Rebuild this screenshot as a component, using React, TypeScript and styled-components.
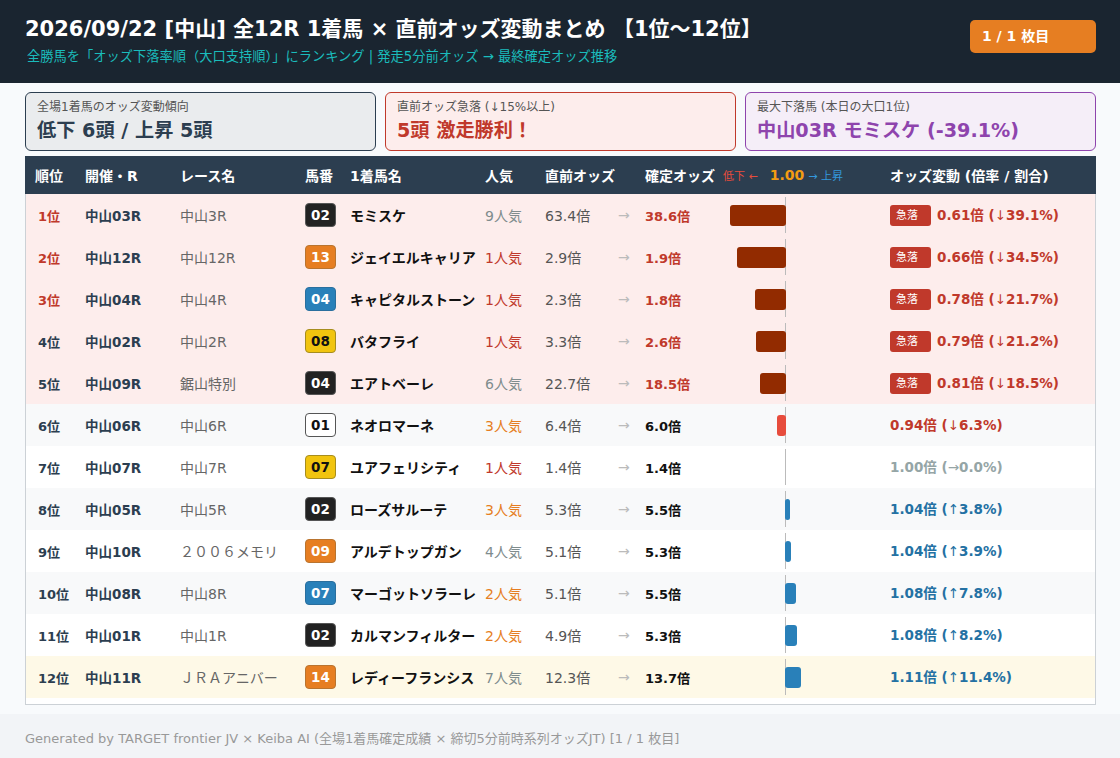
import styled, { createGlobalStyle } from 'styled-components';

const GlobalStyle = createGlobalStyle`
  html, body {
    margin: 0;
    padding: 0;
    background: #f8fafc;
    font-family: "DejaVu Sans", "Noto Sans CJK JP", sans-serif;
  }
`;

const Page = styled.div`
  width: 1120px;
  height: 758px;
  display: flex;
  flex-direction: column;
  overflow: hidden;
`;

const Header = styled.header`
  height: 83px;
  box-sizing: border-box;
  background: #1a2530;
  padding: 15px 24px 0 25px;
  display: flex;
  justify-content: space-between;
  align-items: flex-start;
`;

const Title = styled.h1`
  margin: 0;
  font-size: 21px;
  line-height: 28px;
  font-weight: 700;
  color: #fff;
`;

const Subtitle = styled.p`
  margin: 5px 0 0 2px;
  font-size: 13.25px;
  line-height: 18px;
  color: #1abcbc;
`;

const PageTag = styled.div`
  width: 126px;
  height: 33px;
  margin-top: 5px;
  box-sizing: border-box;
  padding-left: 12px;
  background: #e67e22;
  border-radius: 5px;
  color: #fff;
  font-size: 14px;
  font-weight: 700;
  line-height: 32px;
`;

const Main = styled.main`
  flex: 1;
  padding: 9px 24px 9px 25px;
  display: flex;
  flex-direction: column;
  gap: 5px;
`;

const Cards = styled.div`
  display: grid;
  grid-template-columns: repeat(3, 351px);
  gap: 9px;
`;

const Card = styled.div<{ $border: string; $bg: string; $color: string }>`
  height: 59px;
  box-sizing: border-box;
  padding: 6px 11px 0;
  border: 1px solid ${(p) => p.$border};
  background: ${(p) => p.$bg};
  border-radius: 6px;
  color: ${(p) => p.$color};
`;

const CardLabel = styled.div`
  font-size: 12px;
  line-height: 17px;
  color: #555;
`;

const CardValue = styled.div`
  margin-top: 2px;
  font-size: 19.2px;
  line-height: 25px;
  font-weight: 700;
`;

const Table = styled.div`
  height: 549px;
  box-sizing: border-box;
  border: 1px solid #ccd1d6;
  border-top: 0;
  background: #fff;
`;

const tail = '95px 125px 45px 135px 60px 73px 27px 80px 165px 1fr';

const HeadRow = styled.div`
  height: 38px;
  margin: 0 -1px;
  display: grid;
  grid-template-columns: 60px ${tail};
  align-items: center;
  background: #2c3e50;
  color: #fff;
  font-size: 14px;
  font-weight: 700;
`;

const HeadCell = styled.div<{ $span?: number; $pad?: number }>`
  padding-left: ${(p) => p.$pad ?? 0}px;
  white-space: nowrap;
  ${(p) => (p.$span ? `grid-column: span ${p.$span};` : '')}
`;

const Legend = styled.div`
  display: flex;
  align-items: center;
  margin-left: -2px;
  font-size: 11px;
  font-weight: 400;
  white-space: nowrap;
`;

const LegendDown = styled.span`
  color: #e74c3c;
`;

const LegendUp = styled.span`
  color: #3498db;
`;

const LegendBase = styled.span`
  margin: 0 4px 0 12px;
  color: #f39c12;
  font-size: 14px;
  font-weight: 700;
`;

const Row = styled.div<{ $bg: string }>`
  height: 42px;
  display: grid;
  grid-template-columns: 59px ${tail};
  align-items: center;
  background: ${(p) => p.$bg};
  font-size: 14px;
`;

const Rank = styled.div<{ $hot: boolean }>`
  padding-left: 12px;
  font-size: 13px;
  font-weight: 700;
  color: ${(p) => (p.$hot ? '#c0392b' : '#2c3e50')};
`;

const Venue = styled.div`
  font-size: 13.5px;
  font-weight: 700;
  color: #2c3e50;
`;

const RaceName = styled.div`
  color: #666;
  white-space: nowrap;
`;

const Badge = styled.div<{ $bg: string; $fg: string; $line: string }>`
  width: 31px;
  height: 24px;
  box-sizing: border-box;
  border: 1px solid ${(p) => p.$line};
  border-radius: 4px;
  background: ${(p) => p.$bg};
  color: ${(p) => p.$fg};
  font-weight: 700;
  font-size: 13.5px;
  line-height: 22px;
  text-align: center;
`;

const HorseName = styled.div`
  font-weight: 700;
  color: #111;
  white-space: nowrap;
`;

const Popularity = styled.div<{ $color: string }>`
  color: ${(p) => p.$color};
  white-space: nowrap;
`;

const Odds = styled.div`
  color: #555;
`;

const Arrow = styled.div`
  color: #bbb;
`;

const FinalOdds = styled.div<{ $hot: boolean }>`
  font-size: 13px;
  font-weight: 700;
  color: ${(p) => (p.$hot ? '#c0392b' : '#111')};
`;

const Chart = styled.div`
  position: relative;
  width: 120px;
  height: 36px;
`;

const Axis = styled.div`
  position: absolute;
  left: 60px;
  top: 0;
  bottom: 0;
  width: 1px;
  background: #bbb;
`;

const Bar = styled.div<{ $color: string; $down: boolean }>`
  position: absolute;
  top: 7.5px;
  height: 21px;
  border-radius: 3px;
  background: ${(p) => p.$color};
  ${(p) => (p.$down ? 'right: 59px;' : 'left: 60px;')}
`;

const Change = styled.div`
  display: flex;
  align-items: center;
  gap: 6px;
  white-space: nowrap;
`;

const RapidTag = styled.span`
  width: 41px;
  height: 21px;
  box-sizing: border-box;
  padding-left: 6px;
  border-radius: 3px;
  background: #c0392b;
  color: #fff;
  font-size: 11px;
  line-height: 21px;
`;

const ChangeText = styled.span<{ $color: string }>`
  padding-bottom: 2px;
  color: ${(p) => p.$color};
  font-size: 13.5px;
  font-weight: 700;
`;

const ThinArrow = styled.span`
  font-weight: 400;
`;

const Footer = styled.footer`
  height: 44px;
  box-sizing: border-box;
  padding: 16px 25px 0;
  background: #f2f4f7;
  color: #999;
  font-size: 13px;
  line-height: 18px;
`;

type Gate = 'black' | 'orange' | 'blue' | 'yellow' | 'white';

interface Race {
  venue: string;
  name: string;
  gate: string;
  tone: Gate;
  horse: string;
  pop: number;
  before: string;
  after: string;
  ratio: string;
  pct: number;
}

const gateColors: Record<Gate, { bg: string; fg: string; line: string }> = {
  black: { bg: '#222', fg: '#fff', line: '#555' },
  orange: { bg: '#e67e22', fg: '#fff', line: '#b9742f' },
  blue: { bg: '#2980b9', fg: '#fff', line: '#2a6f9e' },
  yellow: { bg: '#f1c40f', fg: '#111', line: '#a68d1f' },
  white: { bg: '#fff', fg: '#111', line: '#555' },
};

const races: Race[] = [
  { venue: '中山03R', name: '中山3R', gate: '02', tone: 'black', horse: 'モミスケ', pop: 9, before: '63.4', after: '38.6', ratio: '0.61', pct: -39.1 },
  { venue: '中山12R', name: '中山12R', gate: '13', tone: 'orange', horse: 'ジェイエルキャリア', pop: 1, before: '2.9', after: '1.9', ratio: '0.66', pct: -34.5 },
  { venue: '中山04R', name: '中山4R', gate: '04', tone: 'blue', horse: 'キャピタルストーン', pop: 1, before: '2.3', after: '1.8', ratio: '0.78', pct: -21.7 },
  { venue: '中山02R', name: '中山2R', gate: '08', tone: 'yellow', horse: 'バタフライ', pop: 1, before: '3.3', after: '2.6', ratio: '0.79', pct: -21.2 },
  { venue: '中山09R', name: '鋸山特別', gate: '04', tone: 'black', horse: 'エアトベーレ', pop: 6, before: '22.7', after: '18.5', ratio: '0.81', pct: -18.5 },
  { venue: '中山06R', name: '中山6R', gate: '01', tone: 'white', horse: 'ネオロマーネ', pop: 3, before: '6.4', after: '6.0', ratio: '0.94', pct: -6.3 },
  { venue: '中山07R', name: '中山7R', gate: '07', tone: 'yellow', horse: 'ユアフェリシティ', pop: 1, before: '1.4', after: '1.4', ratio: '1.00', pct: 0 },
  { venue: '中山05R', name: '中山5R', gate: '02', tone: 'black', horse: 'ローズサルーテ', pop: 3, before: '5.3', after: '5.5', ratio: '1.04', pct: 3.8 },
  { venue: '中山10R', name: '２００６メモリ', gate: '09', tone: 'orange', horse: 'アルデトップガン', pop: 4, before: '5.1', after: '5.3', ratio: '1.04', pct: 3.9 },
  { venue: '中山08R', name: '中山8R', gate: '07', tone: 'blue', horse: 'マーゴットソラーレ', pop: 2, before: '5.1', after: '5.5', ratio: '1.08', pct: 7.8 },
  { venue: '中山01R', name: '中山1R', gate: '02', tone: 'black', horse: 'カルマンフィルター', pop: 2, before: '4.9', after: '5.3', ratio: '1.08', pct: 8.2 },
  { venue: '中山11R', name: 'ＪＲＡアニバー', gate: '14', tone: 'orange', horse: 'レディーフランシス', pop: 7, before: '12.3', after: '13.7', ratio: '1.11', pct: 11.4 },
];

const popColor = (pop: number) => {
  if (pop === 1) return '#c0392b';
  if (pop <= 3) return '#e67e22';
  return '#7f8c8d';
};

const rowColor = (race: Race, index: number) => {
  if (race.pct <= -15) return '#fdedec';
  if (index === 11) return '#fef9e7';
  return index % 2 === 1 ? '#f8f9fa' : '#fff';
};

const changeColor = (pct: number) => {
  if (pct < 0) return '#c0392b';
  if (pct > 0) return '#2471a3';
  return '#95a5a6';
};

const changeArrow = (pct: number) => {
  if (pct < 0) return '↓';
  return pct > 0 ? '↑' : '→';
};

const barColor = (pct: number) => {
  if (pct <= -15) return '#922b00';
  return pct < 0 ? '#e74c3c' : '#2980b9';
};

const App = () => {
  return (
    <Page>
      <GlobalStyle />
      <Header>
        <div>
          <Title>2026/09/22 [中山] 全12R 1着馬 × 直前オッズ変動まとめ 【1位〜12位】</Title>
          <Subtitle>全勝馬を「オッズ下落率順（大口支持順）」にランキング | 発走5分前オッズ → 最終確定オッズ推移</Subtitle>
        </div>
        <PageTag>1 / 1 枚目</PageTag>
      </Header>
      <Main>
        <Cards>
          <Card $border="#2c3e50" $bg="#eaecee" $color="#2c3e50">
            <CardLabel>全場1着馬のオッズ変動傾向</CardLabel>
            <CardValue>低下 6頭 / 上昇 5頭</CardValue>
          </Card>
          <Card $border="#c0392b" $bg="#fdedec" $color="#c0392b">
            <CardLabel>直前オッズ急落 (↓15%以上)</CardLabel>
            <CardValue>5頭 激走勝利！</CardValue>
          </Card>
          <Card $border="#8e44ad" $bg="#f5eef8" $color="#8e44ad">
            <CardLabel>最大下落馬 (本日の大口1位)</CardLabel>
            <CardValue>中山03R モミスケ (-39.1%)</CardValue>
          </Card>
        </Cards>
        <Table>
          <HeadRow>
            <HeadCell $pad={10}>順位</HeadCell>
            <HeadCell>開催・R</HeadCell>
            <HeadCell>レース名</HeadCell>
            <HeadCell>馬番</HeadCell>
            <HeadCell>1着馬名</HeadCell>
            <HeadCell>人気</HeadCell>
            <HeadCell $span={2}>直前オッズ</HeadCell>
            <HeadCell>確定オッズ</HeadCell>
            <Legend>
              <LegendDown>低下 ←</LegendDown>
              <LegendBase>1.00</LegendBase>
              <LegendUp>→ 上昇</LegendUp>
            </Legend>
            <HeadCell>オッズ変動 (倍率 / 割合)</HeadCell>
          </HeadRow>
          {races.map((race, i) => (
            <Row key={race.venue} $bg={rowColor(race, i)}>
              <Rank $hot={i < 3}>{i + 1}位</Rank>
              <Venue>{race.venue}</Venue>
              <RaceName>{race.name}</RaceName>
              <Badge $bg={gateColors[race.tone].bg} $fg={gateColors[race.tone].fg} $line={gateColors[race.tone].line}>
                {race.gate}
              </Badge>
              <HorseName>{race.horse}</HorseName>
              <Popularity $color={popColor(race.pop)}>{race.pop}人気</Popularity>
              <Odds>{race.before}倍</Odds>
              <Arrow>→</Arrow>
              <FinalOdds $hot={race.pct <= -15}>{race.after}倍</FinalOdds>
              <Chart>
                <Axis />
                {race.pct !== 0 && (
                  <Bar $color={barColor(race.pct)} $down={race.pct < 0} style={{ width: Math.abs(race.pct) * 1.42 }} />
                )}
              </Chart>
              <Change>
                {race.pct <= -15 && <RapidTag>急落</RapidTag>}
                <ChangeText $color={changeColor(race.pct)}>
                  {race.ratio}倍 (<ThinArrow>{changeArrow(race.pct)}</ThinArrow>{Math.abs(race.pct).toFixed(1)}%)
                </ChangeText>
              </Change>
            </Row>
          ))}
        </Table>
      </Main>
      <Footer>Generated by TARGET frontier JV × Keiba AI (全場1着馬確定成績 × 締切5分前時系列オッズJT) [1 / 1 枚目]</Footer>
    </Page>
  );
};

export default App;
